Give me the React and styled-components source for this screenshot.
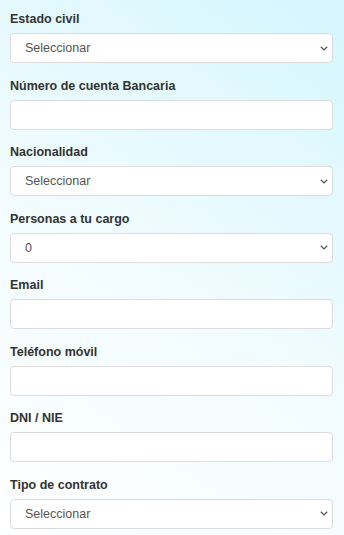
import React from "react";
import styled, { createGlobalStyle } from "styled-components";

const Global = createGlobalStyle`
  html, body { margin: 0; padding: 0; }
  body {
    font-family: "Liberation Sans", Arial, sans-serif;
    background: linear-gradient(35deg, #ffffff 0%, #f2fcff 45%, #d4f6fe 100%);
    min-height: 535px;
  }
`;

const Form = styled.form`
  display: flex;
  flex-direction: column;
  gap: 14.5px;
  padding: 11px 11px 0 10px;
`;

const Field = styled.div`
  display: flex;
  flex-direction: column;
  gap: 6px;
`;

const Label = styled.label`
  font-size: 12.5px;
  font-weight: bold;
  color: #333;
  line-height: 16px;
`;

const boxCss = `
  box-sizing: border-box;
  width: 100%;
  height: 30px;
  border: 1px solid #dcdcdc;
  border-radius: 4px;
  background-color: #fff;
  font-family: "Liberation Sans", Arial, sans-serif;
  font-size: 12.5px;
  color: #555;
  outline: none;
`;

const Input = styled.input`
  ${boxCss}
  padding: 0 14px;
`;

const chevron =
  "url(\"data:image/svg+xml,%3Csvg xmlns='http://www.w3.org/2000/svg' width='8' height='5' viewBox='0 0 8 5'%3E%3Cpath d='M0.8 0.8 L4 3.9 L7.2 0.8' fill='none' stroke='%23555' stroke-width='1.3'/%3E%3C/svg%3E\")";

const Select = styled.select`
  ${boxCss}
  appearance: none;
  -webkit-appearance: none;
  padding: 0 20px 0 14px;
  background-image: ${chevron};
  background-repeat: no-repeat;
  background-position: right 4px center;
  background-size: 8px 5px;
`;

const fields = [
  { label: "Estado civil", type: "select", value: "Seleccionar" },
  { label: "Número de cuenta Bancaria", type: "input" },
  { label: "Nacionalidad", type: "select", value: "Seleccionar" },
  { label: "Personas a tu cargo", type: "select", value: "0" },
  { label: "Email", type: "input" },
  { label: "Teléfono móvil", type: "input" },
  { label: "DNI / NIE", type: "input" },
  { label: "Tipo de contrato", type: "select", value: "Seleccionar" },
];

export default function App() {
  return (
    <>
      <Global />
      <Form>
        {fields.map((f) => (
          <Field key={f.label}>
            <Label>{f.label}</Label>
            {f.type === "select" ? (
              <Select defaultValue={f.value}>
                <option>{f.value}</option>
              </Select>
            ) : (
              <Input type="text" />
            )}
          </Field>
        ))}
      </Form>
    </>
  );
}
